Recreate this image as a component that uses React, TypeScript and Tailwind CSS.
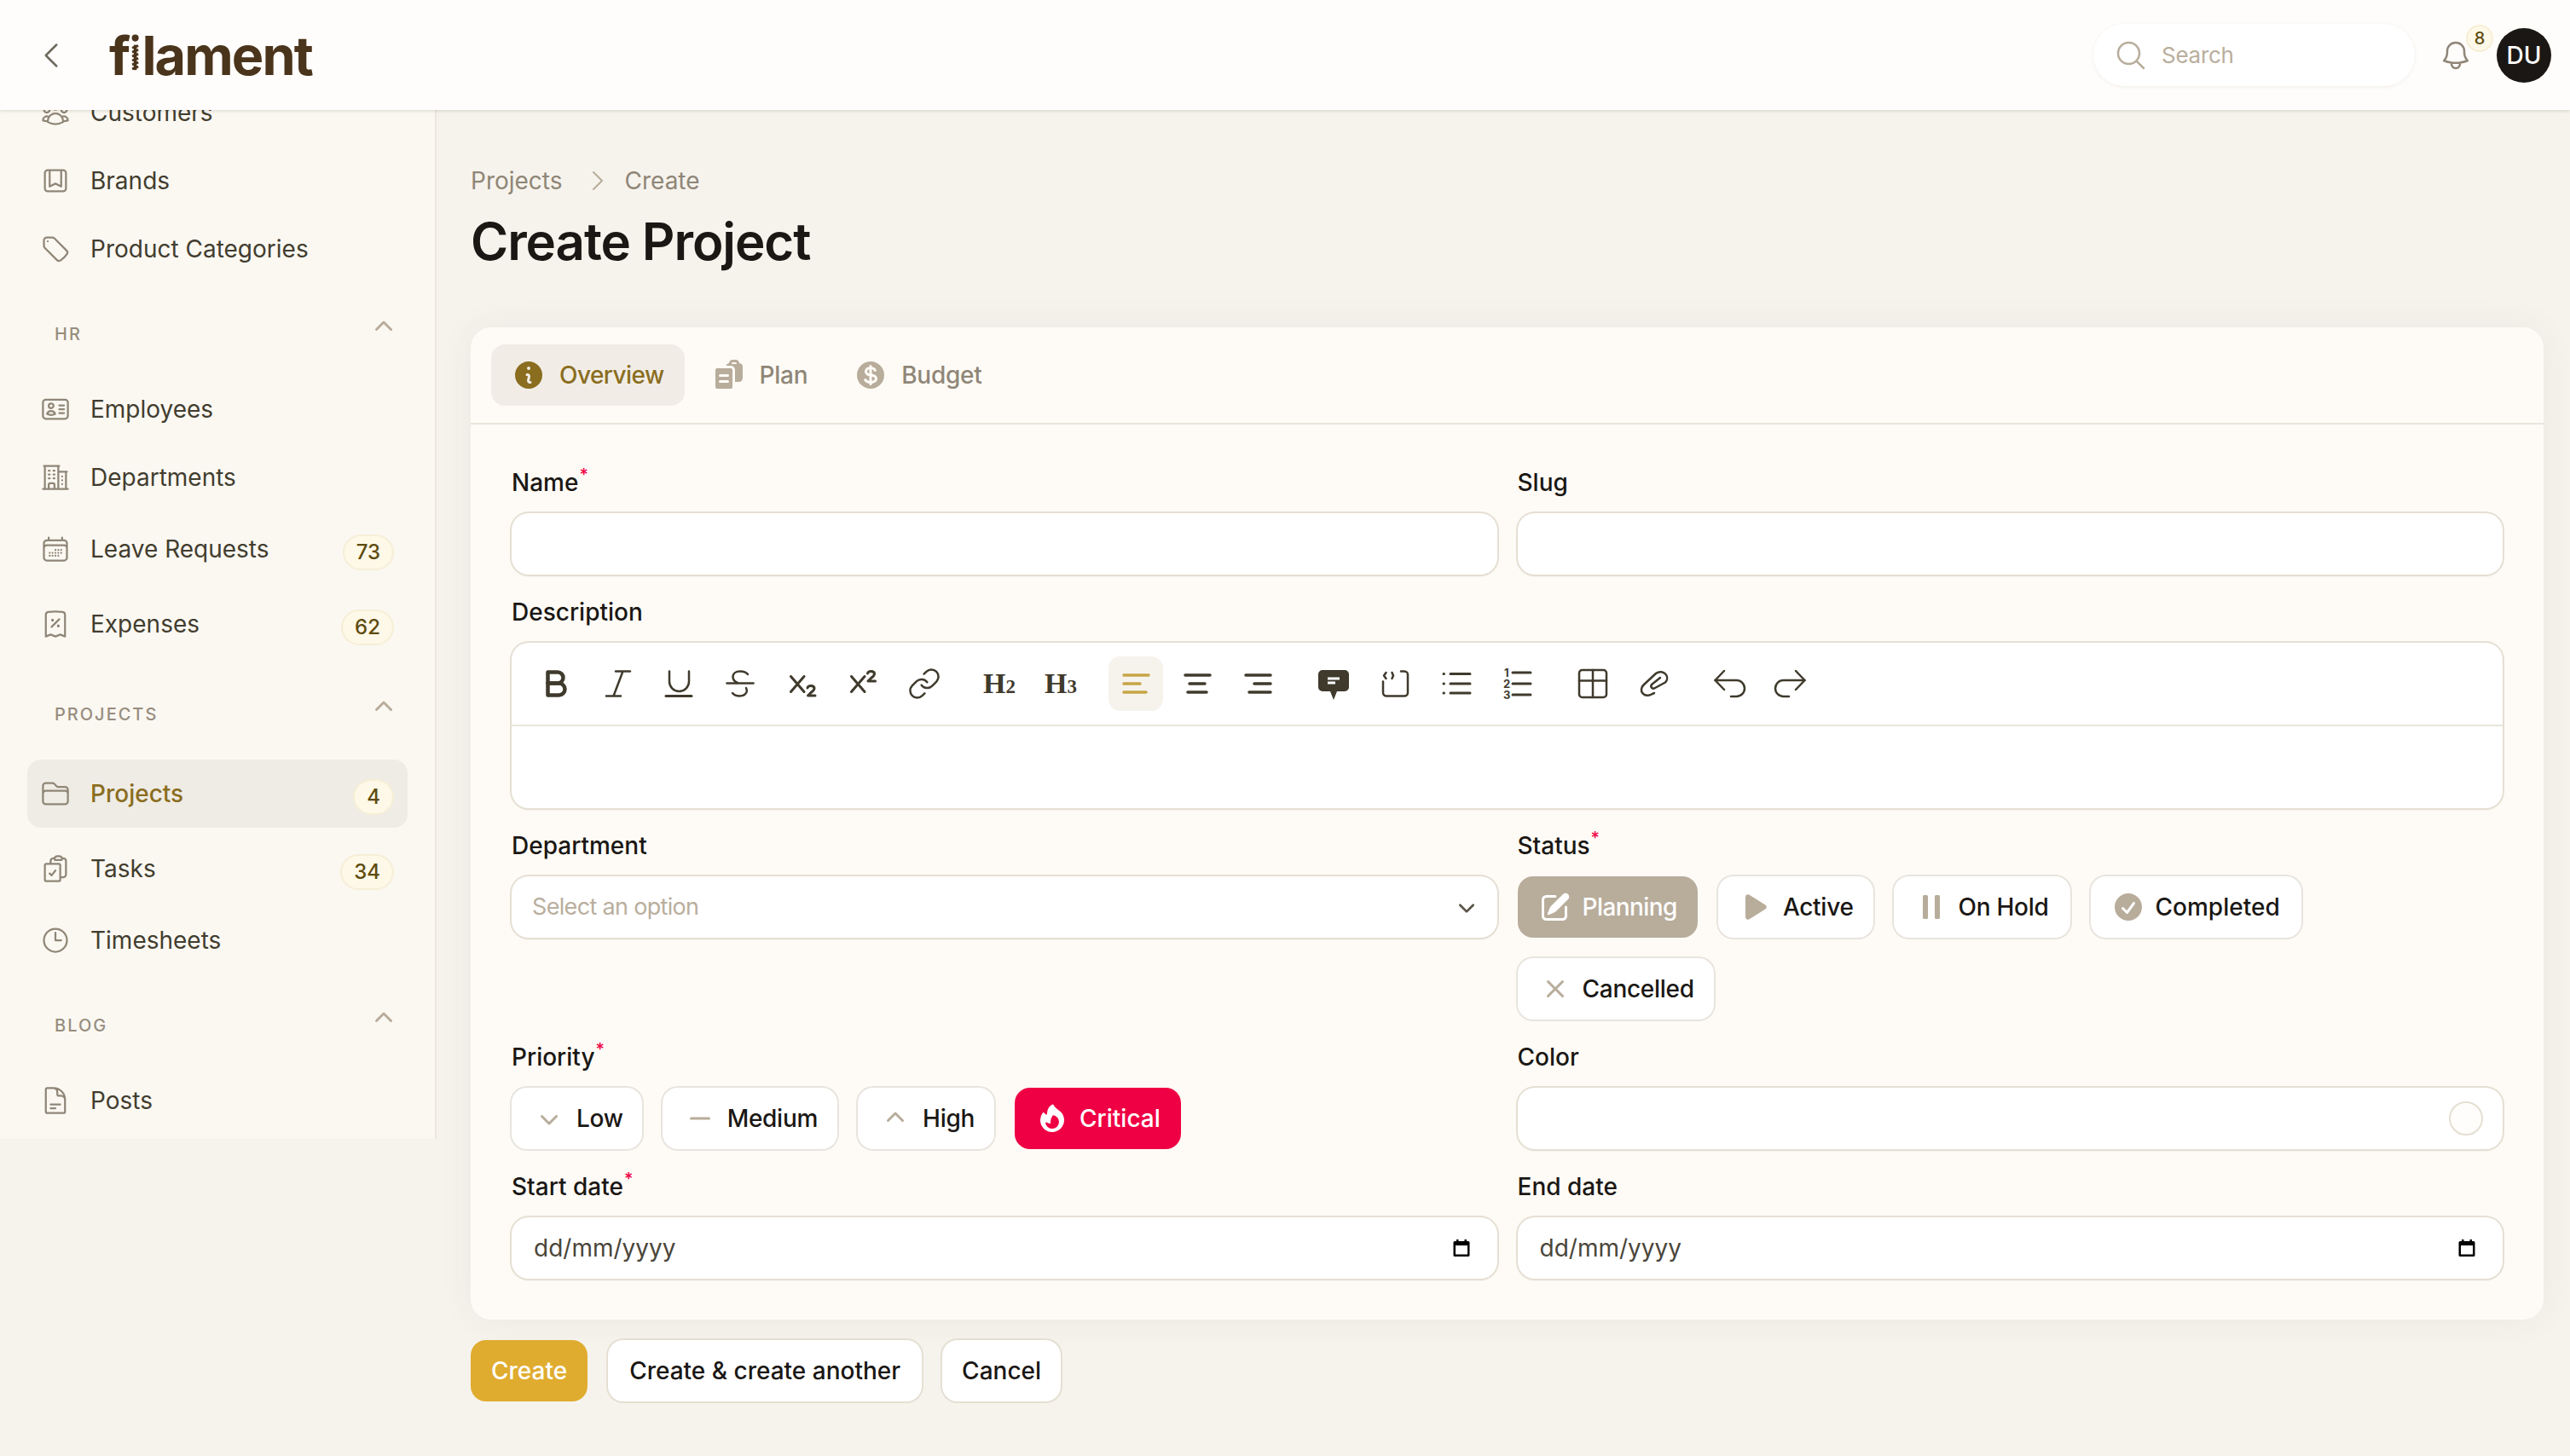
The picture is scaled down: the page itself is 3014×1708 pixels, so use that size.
import React from 'react';
import {
  HiOutlineUserGroup, HiOutlineBookmarkSquare, HiOutlineTag, HiOutlineIdentification,
  HiOutlineBuildingOffice2, HiOutlineCalendarDays, HiOutlineReceiptPercent, HiOutlineFolder,
  HiOutlineClipboardDocumentCheck, HiOutlineClock, HiOutlineDocumentText, HiOutlineChevronLeft,
  HiOutlineChevronRight, HiOutlineMagnifyingGlass, HiOutlineBell, HiMiniChevronUp, HiMiniChevronDown,
  HiMiniInformationCircle, HiMiniClipboardDocumentList, HiMiniCurrencyDollar, HiMiniPencilSquare,
  HiMiniPlay, HiMiniPause, HiMiniCheckCircle, HiMiniXMark, HiMiniMinus, HiMiniFire,
} from 'react-icons/hi2';

type IconT = React.ComponentType<{ className?: string }>;

function NavRow({ icon: Icon, label, badge, active }: { icon: IconT; label: string; badge?: string; active?: boolean }) {
  return (
    <div className={`flex items-center gap-[23px] pl-[15px] pr-[16px] rounded-[16px] ${badge ? (active ? 'h-[80px] bg-[#efece5]' : 'h-[80px]') : 'h-[72px]'}`}>
      <Icon className="w-[36px] h-[36px] shrink-0 text-[#8f8677]" />
      <span className={`flex-1 text-[28px] leading-[40px] ${active ? 'text-[#8a6d1f] font-medium' : 'text-[#423d2f]'}`}>{label}</span>
      {badge && (
        <span className="mt-[8px] h-[42px] px-[14px] flex items-center rounded-full bg-[#fdf8e7] border-2 border-[#f6eed6] text-[24px] font-medium text-[#5e4b10]">{badge}</span>
      )}
    </div>
  );
}

function SectionHead({ label, spaced }: { label: string; spaced?: boolean }) {
  return (
    <div className={`flex items-center justify-between h-[32px] ${spaced ? 'mt-[50px] mb-[37px]' : 'mt-[48px] mb-[36px]'} pl-[32px] pr-[8px]`}>
      <span className="text-[20px] font-medium tracking-[0.1em] text-[#978d7e]">{label}</span>
      <HiMiniChevronUp className="w-[40px] h-[40px] text-[#b8ac9b] -translate-y-[8px]" />
    </div>
  );
}

function Label({ text, req }: { text: string; req?: boolean }) {
  return (
    <div className="h-[40px] mb-[16px] text-[28px] leading-[40px] font-medium text-[#1a1714]">
      {text}
      {req && <sup className="text-[#ef0044] text-[20px] font-medium ml-[1px] top-[-12px]">*</sup>}
    </div>
  );
}

const inputBox = 'h-[72px] rounded-[20px] bg-white ring-2 ring-[#e5dfd3] shadow-[0_2px_2px_rgba(60,50,30,0.12)]';

function Chip({ icon: Icon, label, on, color, extra }: { icon: IconT; label: string; on?: boolean; color?: string; extra?: string }) {
  return (
    <div className={`h-[72px] flex items-center gap-[12px] pl-[24px] rounded-[18px] text-[28px] font-medium ${extra ?? 'pr-[23px] tracking-[-0.01em]'} ${on ? `${color} text-white` : 'bg-white ring-2 ring-[#e8e4de] text-[#1a1714]'}`}>
      <Icon className={`w-[40px] h-[40px] ${on ? 'text-white' : 'text-[#b8ac9b]'}`} />
      {label}
    </div>
  );
}

function Tool({ children, active }: { children: React.ReactNode; active?: boolean }) {
  return (
    <div className={`w-[64px] h-[64px] flex items-center justify-center rounded-[14px] text-[#3f3a2c] ${active ? 'bg-[#f6f3ed]' : ''}`}>
      {children}
    </div>
  );
}

function TI({ children }: { children: React.ReactNode }) {
  return (
    <svg width="40" height="40" viewBox="0 0 40 40" fill="none" stroke="currentColor" strokeWidth="2.5" strokeLinecap="round" strokeLinejoin="round">
      {children}
    </svg>
  );
}

function Toolbar() {
  return (
    <div className="h-[98px] flex items-center gap-[24px] pl-[20px] border-b-2 border-[#e9e5dc]">
      <div className="flex gap-[8px]">
        <Tool><TI><g strokeWidth="4.5"><path d="M10.5 6.5h11.5a6.5 6.5 0 0 1 0 13H10.5z" /><path d="M10.5 19.5h13a7 7 0 0 1 0 14h-13z" /></g></TI></Tool>
        <Tool><TI><path d="M18 5.5h17M7 34.5h17M26.5 5.5 15.5 34.5" /></TI></Tool>
        <Tool><TI><path d="M9 5.5v12a11.5 11.5 0 0 0 23 0v-12" /><path d="M5 34.5h30" strokeWidth="3" /></TI></Tool>
        <Tool><TI><path d="M4.5 19.5h31" /><path d="M29 9c-2-2.5-6-3.5-9-3.5-5 0-8.5 2.5-8.5 6.5 0 3 2 5.5 5.5 7" /><path d="M27 25c1 2 1 3.5.5 5-1.5 3-4.5 4.5-8 4.5-3.5 0-6.5-1-8.5-3.5" /></TI></Tool>
        <Tool><TI><g strokeWidth="3"><path d="M7.5 11.5l15.5 18M23 11.5 7.5 29.5" /><path d="M27 25c.5-2 2-2.5 4-2.5s4 1 4 3-1.5 3-4 5l-3.5 3.5h8.5" /></g></TI></Tool>
        <Tool><TI><g strokeWidth="3"><path d="M6.5 11.5l15.5 18M22 11.5 6.5 29.5" /><path d="M25.5 8c.5-2 2-2.5 4-2.5s4 1 4 3-1.5 3-4 5l-3.5 3.5h8.5" /></g></TI></Tool>
        <Tool><LinkIcon /></Tool>
      </div>
      <div className="flex gap-[8px]">
        <Tool><span className="font-[family-name:'Liberation_Serif',serif] font-bold text-[34px] leading-none">H<span className="text-[23px]">2</span></span></Tool>
        <Tool><span className="font-[family-name:'Liberation_Serif',serif] font-bold text-[34px] leading-none">H<span className="text-[23px]">3</span></span></Tool>
      </div>
      <div className="flex gap-[8px]">
        <Tool active><div className="text-[#c6a545]"><TI><g strokeWidth="3.5"><path d="M6 10h29M6 20h19M6 30h26" /></g></TI></div></Tool>
        <Tool><TI><g strokeWidth="3.5"><path d="M6 10h29M11 20h18M9 30h22" /></g></TI></Tool>
        <Tool><TI><g strokeWidth="3.5"><path d="M5 10h29M15 20h19M9 30h25" /></g></TI></Tool>
      </div>
      <div className="flex gap-[8px]">
        <Tool>
          <svg width="40" height="40" viewBox="0 0 40 40">
            <path d="M7 4h26a5 5 0 0 1 5 5v15a5 5 0 0 1-5 5h-9l-4 10-4-10H7a5 5 0 0 1-5-5V9a5 5 0 0 1 5-5z" fill="currentColor" />
            <path d="M13 14h14M13 19h9" stroke="#fff" strokeWidth="3" />
          </svg>
        </Tool>
        <Tool><TI><path d="M27 5.5h4a4 4 0 0 1 4 4v21a4 4 0 0 1-4 4H10a4 4 0 0 1-4-4v-13" /><path d="M9.5 7 7 10.5 9.5 14M16.5 7 18 10.5 16.5 14" /></TI></Tool>
        <Tool><TI><g strokeWidth="3"><path d="M13 8.5h23M13 20h23M13 31h23" /><path d="M5 8.5h.5M5 20h.5M5 31h.5" /></g></TI></Tool>
        <Tool>
          <svg width="40" height="40" viewBox="0 0 40 40" fill="currentColor">
            <path d="M14 7h21M14 20h21M14 33h21" stroke="currentColor" strokeWidth="3" strokeLinecap="round" />
            <text x="4" y="12" fontSize="13" fontWeight="700" fontFamily="Inter, sans-serif">1</text>
            <text x="3" y="25" fontSize="13" fontWeight="700" fontFamily="Inter, sans-serif">2</text>
            <text x="3" y="38" fontSize="13" fontWeight="700" fontFamily="Inter, sans-serif">3</text>
          </svg>
        </Tool>
      </div>
      <div className="flex gap-[8px]">
        <Tool><TI><rect x="4" y="4" width="32" height="32" rx="3.5" /><path d="M4 16.5h32M20 4v32" /></TI></Tool>
        <Tool><TI><path d="M20 31c-2 .8-4 1.800-6 2.500C8 35 3.500 30 5.500 24.500c.5-1.500 1.500-2.500 2.500-3.500L22 8c4-3 9-2 11.500 1 2.500 3 2 7-.5 9.500L21 25c-3 2-6-1-4-4l10-8" /></TI></Tool>
      </div>
      <div className="flex gap-[8px]">
        <Tool><TI><path d="M14 5 3.5 16 14 27" /><path d="M3.5 16h25a9.5 9.5 0 0 1 0 19H22" /></TI></Tool>
        <Tool><TI><path d="M26 5l10.500 11L26 27" /><path d="M36.500 16h-25a9.500 9.500 0 0 0 0 19H18" /></TI></Tool>
      </div>
    </div>
  );
}

function LinkIcon() {
  return (
    <svg width="40" height="40" viewBox="0 0 24 24" fill="none" stroke="currentColor" strokeWidth="1.5" strokeLinecap="round" strokeLinejoin="round">
      <path d="M10 13a5 5 0 0 0 7.54.54l3-3a5 5 0 0 0-7.07-7.07l-1.72 1.71" />
      <path d="M14 11a5 5 0 0 0-7.54-.54l-3 3a5 5 0 0 0 7.07 7.07l1.71-1.71" />
    </svg>
  );
}

function CalendarIcon() {
  return (
    <svg width="24" height="24" viewBox="0 0 24 24" fill="none">
      <path d="M6 2h2.5v2h7V2H18v2h2a1.5 1.5 0 0 1 1.5 1.5v15A1.5 1.5 0 0 1 20 22H4a1.5 1.5 0 0 1-1.5-1.5v-15A1.5 1.5 0 0 1 4 4h2zM5 9v10.5h14V9z" fill="#000" />
    </svg>
  );
}

function DateInput() {
  return (
    <div className={`${inputBox} flex items-center justify-between pl-[26px] pr-[30px] text-[28px] text-[#4a463a]`}>
      <span>dd/mm/yyyy</span>
      <CalendarIcon />
    </div>
  );
}

function LogoI() {
  return (
    <span className="relative inline-block text-transparent">
      i
      <svg className="absolute left-0 top-0 w-full h-[64px]" viewBox="0 0 17 64" preserveAspectRatio="xMidYMin meet" fill="#4a341c" stroke="#4a341c">
        <circle cx="8.5" cy="13" r="4.500" stroke="none" />
        <rect x="6.500" y="22" width="4" height="33" stroke="none" />
        <path d="M4.500 26 12.500 23M4.500 31.500l8-3M4.500 37l8-3M4.500 42.500l8-3M4.500 48l8-3M4.500 53.500l8-3" strokeWidth="3.200" />
      </svg>
    </span>
  );
}

export default function App() {
  return (
    <div className="w-[3014px] h-[1708px] overflow-hidden bg-[#f6f3ed] font-[family-name:Inter,sans-serif] flex flex-col">
      <header className="relative z-10 h-[129px] shrink-0 flex items-center bg-[#fffdfb] shadow-[0_2px_3px_rgba(60,50,30,0.12)]">
        <HiOutlineChevronLeft className="ml-[40px] w-[40px] h-[40px] text-[#6e6a60]" />
        <span className="ml-[48px] text-[63px] leading-[64px] font-bold tracking-[-0.03em] text-[#4a341c]">f<LogoI />lament</span>
        <div className="ml-auto flex items-center">
          <div className="w-[377px] h-[73px] rounded-full bg-white shadow-[0_1px_4px_rgba(60,50,30,0.08)] flex items-center pl-[24px] gap-[16px]">
            <HiOutlineMagnifyingGlass className="w-[40px] h-[40px] text-[#b8ac9b]" />
            <span className="text-[26px] tracking-[-0.01em] text-[#b9ae9d]">Search</span>
          </div>
          <div className="relative ml-[28px] w-[40px] h-[40px]">
            <HiOutlineBell className="w-[40px] h-[40px] text-[#8f8677]" />
            <span className="absolute -top-[16px] left-[32px] w-[32px] h-[32px] rounded-full flex items-center justify-center bg-[#fdf8e7] border-2 border-[#f6eed6] text-[20px] font-medium text-[#5e4b10]">8</span>
          </div>
          <div className="ml-[28px] mr-[22px] w-[64px] h-[64px] rounded-full bg-[#1a1714] flex items-center justify-center text-[28px] font-medium text-white">DU</div>
        </div>
      </header>

      <div className="flex-1 flex min-h-0">
        <aside className="w-[512px] shrink-0 self-start h-[1207px] overflow-hidden bg-[#fbf8f2] border-r-2 border-[#ebe7de] pl-[32px] pr-[32px]">
          <nav className="-mt-[33px] flex flex-col">
            <div className="flex flex-col gap-[8px]">
              <NavRow icon={HiOutlineUserGroup} label="Customers" />
              <NavRow icon={HiOutlineBookmarkSquare} label="Brands" />
              <NavRow icon={HiOutlineTag} label="Product Categories" />
            </div>
            <SectionHead label="HR" />
            <div className="flex flex-col gap-[8px]">
              <NavRow icon={HiOutlineIdentification} label="Employees" />
              <NavRow icon={HiOutlineBuildingOffice2} label="Departments" />
              <NavRow icon={HiOutlineCalendarDays} label="Leave Requests" badge="73" />
              <NavRow icon={HiOutlineReceiptPercent} label="Expenses" badge="62" />
            </div>
            <SectionHead label="PROJECTS" spaced />
            <div className="flex flex-col gap-[8px]">
              <NavRow icon={HiOutlineFolder} label="Projects" badge="4" active />
              <NavRow icon={HiOutlineClipboardDocumentCheck} label="Tasks" badge="34" />
              <NavRow icon={HiOutlineClock} label="Timesheets" />
            </div>
            <SectionHead label="BLOG" />
            <NavRow icon={HiOutlineDocumentText} label="Posts" />
          </nav>
        </aside>

        <main className="flex-1 min-w-0 pl-[40px] pr-[31px] pt-[63px]">
          <div className="h-[40px] flex items-center text-[28px] text-[#8f8677]">
            <span>Projects</span>
            <HiOutlineChevronRight className="ml-[25px] mr-[16px] w-[32px] h-[32px] text-[#b8ac9b]" />
            <span>Create</span>
          </div>
          <h1 className="mt-[21px] h-[60px] text-[60px] leading-[60px] font-semibold tracking-[-0.018em] text-[#1a1714]">Create Project</h1>

          <section className="mt-[71px] rounded-[24px] bg-[#fefbf6] shadow-[0_0_40px_rgba(60,50,30,0.06)]">
            <div className="h-[114px] flex items-center gap-[16px] px-[24px] border-b-2 border-[#e9e5dc]">
              <div className="h-[72px] flex items-center gap-[16px] px-[24px] rounded-[16px] bg-[#f1ede6] text-[28px] font-medium tracking-[-0.02em] text-[#8a6d1f]">
                <HiMiniInformationCircle className="w-[40px] h-[40px] text-[#8a6d1f]" />Overview
              </div>
              <div className="h-[72px] flex items-center gap-[16px] px-[16px] text-[28px] font-medium tracking-[-0.01em] text-[#8f8677]">
                <HiMiniClipboardDocumentList className="w-[40px] h-[40px] text-[#b8ac9b]" />Plan
              </div>
              <div className="ml-[6px] h-[72px] flex items-center gap-[16px] px-[16px] text-[28px] font-medium tracking-[-0.01em] text-[#8f8677]">
                <HiMiniCurrencyDollar className="w-[40px] h-[40px] text-[#b8ac9b]" />Budget
              </div>
            </div>

            <div className="p-[48px] grid grid-cols-2 gap-x-[24px] gap-y-[24px]">
              <div>
                <Label text="Name" req />
                <div className={inputBox} />
              </div>
              <div>
                <Label text="Slug" />
                <div className={inputBox} />
              </div>
              <div className="col-span-2">
                <Label text="Description" />
                <div className="h-[194px] rounded-[20px] bg-white ring-2 ring-[#e5dfd3] shadow-[0_2px_2px_rgba(60,50,30,0.12)]">
                  <Toolbar />
                </div>
              </div>
              <div>
                <Label text="Department" />
                <div className={`${inputBox} flex items-center justify-between pl-[24px] pr-[18px]`}>
                  <span className="text-[27px] tracking-[-0.025em] text-[#b9ae9d]">Select an option</span>
                  <HiMiniChevronDown className="w-[36px] h-[36px] text-[#5a5548]" />
                </div>
              </div>
              <div>
                <Label text="Status" req />
                <div className="flex flex-wrap gap-x-[24px] gap-y-[24px]">
                  <Chip icon={HiMiniPencilSquare} label="Planning" on color="bg-[#b8ac9b]" extra="pr-[24px] tracking-[-0.02em]" />
                  <Chip icon={HiMiniPlay} label="Active" />
                  <Chip icon={HiMiniPause} label="On Hold" extra="pr-[25px] tracking-[-0.01em]" />
                  <Chip icon={HiMiniCheckCircle} label="Completed" extra="pr-[25px]" />
                  <Chip icon={HiMiniXMark} label="Cancelled" />
                </div>
              </div>
              <div>
                <Label text="Priority" req />
                <div className="flex flex-wrap gap-x-[24px]">
                  <Chip icon={HiMiniChevronDown} label="Low" extra="pr-[22px] tracking-[-0.01em]" />
                  <Chip icon={HiMiniMinus} label="Medium" />
                  <Chip icon={HiMiniChevronUp} label="High" />
                  <Chip icon={HiMiniFire} label="Critical" on color="bg-[#ef0044]" extra="pr-[24px]" />
                </div>
              </div>
              <div>
                <Label text="Color" />
                <div className={`${inputBox} flex items-center justify-end pr-[23px]`}>
                  <span className="w-[40px] h-[40px] rounded-full border-2 border-[#e5dfd3] bg-[#fefdfb]" />
                </div>
              </div>
              <div>
                <Label text="Start date" req />
                <DateInput />
              </div>
              <div>
                <Label text="End date" />
                <DateInput />
              </div>
            </div>
          </section>

          <div className="mt-[24px] flex gap-[24px] text-[28px] font-medium">
            <button className="h-[72px] px-[24px] rounded-[18px] bg-[#e0ac2f] text-white">Create</button>
            <button className="h-[72px] px-[25px] rounded-[18px] bg-white ring-2 ring-[#e5dfd3] text-[#1a1714]">Create &amp; create another</button>
            <button className="h-[72px] px-[23px] rounded-[18px] bg-white ring-2 ring-[#e5dfd3] text-[#1a1714]">Cancel</button>
          </div>
        </main>
      </div>
    </div>
  );
}
